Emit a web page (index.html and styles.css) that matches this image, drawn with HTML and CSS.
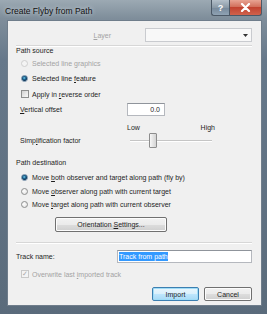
FILE: index.html
```html
<!DOCTYPE html>
<html lang="en">
<head>
    <meta charset="UTF-8">
    <title>Create Flyby from Path</title>
    <link rel="stylesheet" href="styles.css">
</head>
<body>
<div class="window">

    <!-- Barra de titulo -->
    <div class="titlebar">
        <span class="title">Create Flyby from Path</span>
        <div class="caption">
            <span class="cap-help">?</span>
            <span class="cap-close">
                <svg width="11" height="9" viewBox="0 0 11 9"><path d="M2 1 L9 8 M9 1 L2 8" stroke="#fff" stroke-width="2.2" stroke-linecap="round"/></svg>
            </span>
        </div>
    </div>

    <div class="client">

        <div class="layer-row">
            <span class="dim"><u>L</u>ayer</span>
            <div class="combo">
                <svg width="5" height="3" viewBox="0 0 5 3"><path d="M0 0 H5 L2.5 3 Z" fill="#333"/></svg>
            </div>
        </div>

        <div class="sep top-sep"></div>

        <div class="heading">Path source</div>
        <div class="opt opt-1 dim"><span class="radio disabled"></span><span>Selected line graphics</span></div>
        <div class="opt opt-2"><span class="radio checked"></span><span>Selected line <u>f</u>eature</span></div>
        <div class="opt opt-3"><span class="check"></span><span>Apply in <u>r</u>everse order</span></div>

        <div class="field-row offset-row">
            <span class="field-label"><u>V</u>ertical offset</span>
            <div class="textbox num">0.0</div>
        </div>

        <div class="range-labels">
            <span>Low</span>
            <span>High</span>
        </div>
        <div class="field-row slider-row">
            <span class="field-label">Simp<u>l</u>ification factor</span>
            <div class="slider">
                <div class="track"></div>
                <div class="thumb"></div>
            </div>
        </div>

        <div class="heading dest-heading">Path destination</div>
        <div class="opt dest-1"><span class="radio checked"></span><span>Move <u>b</u>oth observer and target along path (fly by)</span></div>
        <div class="opt dest-2"><span class="radio"></span><span>Move <u>o</u>bserver along path with current target</span></div>
        <div class="opt dest-3"><span class="radio"></span><span>Move <u>t</u>arget along path with current observer</span></div>

        <button class="btn orient-btn">Orientation <u>S</u>ettings...</button>

        <div class="sep bottom-sep"></div>

        <div class="track-row">
            <span class="track-label">Track name:</span>
            <div class="textbox track-box"><span class="selected">Track from path</span></div>
        </div>

        <div class="opt overwrite dim"><span class="check checked-dim">&#10003;</span><span>Overwrite last <u>i</u>mported track</span></div>

        <div class="actions">
            <button class="btn default">Import</button>
            <button class="btn">Cancel</button>
        </div>
    </div>
</div>
</body>
</html>
```

FILE: styles.css
```css
body {
    margin: 0;
    font-family: "Liberation Sans", Arial, sans-serif;
    font-size: 7px;
    color: #1e1e1e;
}
u {
    text-decoration-thickness: 1px;
    text-underline-offset: 1px;
}
.window {
    width: 267px;
    height: 314px;
    box-sizing: border-box;
    padding: 0 5px 8px 7px;
    background: linear-gradient(to bottom, #9ca9b3 0, #7f8e9b 18px, #66788a 60px, #5a6b7b 100%);
    display: flex;
    flex-direction: column;
}
.titlebar {
    height: 20px;
    display: flex;
    align-items: flex-start;
    margin-left: -2px;
}
.title {
    font-size: 8.5px;
    color: #111;
    padding-top: 6px;
    text-shadow: 0 0 4px #dfe6ec;
}
.caption {
    margin-left: auto;
    display: flex;
}
.cap-help, .cap-close {
    height: 16px;
    display: flex;
    align-items: center;
    justify-content: center;
    box-sizing: border-box;
    border: 1px solid #4b5866;
    border-top: none;
}
.cap-help {
    width: 18px;
    color: #fff;
    font-weight: bold;
    font-size: 9px;
    background: linear-gradient(to bottom, #b4c0ca, #8a99a6 50%, #76889a 51%, #8fa2b3);
    border-radius: 0 0 0 3px;
    border-right: none;
}
.cap-close {
    width: 33px;
    background: linear-gradient(to bottom, #e8a493, #d2705c 45%, #c24330 50%, #d0624c);
    border-radius: 0 0 3px 0;
}
.client {
    flex: 1;
    background: #f0f0f0;
    border: 1px solid #6f7d8b;
    padding: 7px 9px 0 8px;
}
.dim {
    color: #a3a3a3;
}
.layer-row {
    height: 14px;
    display: flex;
    align-items: center;
    justify-content: flex-end;
}
.layer-row .dim {
    margin-right: 34px;
}
.combo {
    width: 107px;
    height: 14px;
    box-sizing: border-box;
    border: 1px solid #c9cbcf;
    background: #f8f8f8;
    display: flex;
    align-items: center;
    justify-content: flex-end;
    padding-right: 3px;
}
.sep {
    height: 1px;
    background: #d7d7d7;
    border-bottom: 1px solid #fff;
}
.top-sep {
    margin-top: 3px;
}
.heading {
    height: 8px;
    line-height: 8px;
}
.opt {
    display: flex;
    align-items: center;
    padding-left: 5px;
    height: 12px;
}
.opt-1 { margin-top: 2px; }
.opt-2 { margin-top: 3px; }
.opt-3 { margin-top: 4px; }
.radio {
    width: 7px;
    height: 7px;
    box-sizing: border-box;
    border-radius: 50%;
    border: 1px solid #8e8f8f;
    background: radial-gradient(circle at 40% 40%, #fff, #dcdcdc);
    margin-right: 4px;
}
.radio.disabled {
    border-color: #cfcfcf;
    background: #f4f4f4;
}
.radio.checked {
    border-color: #6d8aa5;
    background: radial-gradient(circle at 45% 40%, #7fd0ef 0, #1d6a96 35%, #0e3050 70%, #d7e3ea 72%);
}
.check {
    width: 8px;
    height: 8px;
    box-sizing: border-box;
    border: 1px solid #8e8f8f;
    background: linear-gradient(135deg, #d2d2d2, #fafafa);
    margin-right: 3px;
}
.check.checked-dim {
    border-color: #c9c9c9;
    background: #f4f4f4;
    color: #a8a8a8;
    font-size: 7px;
    line-height: 6px;
    text-align: center;
}
.field-row {
    display: flex;
    align-items: center;
    padding-left: 4px;
}
.field-label {
    width: 107px;
}
.offset-row {
    height: 13px;
    margin-top: 3px;
}
.textbox {
    height: 13px;
    box-sizing: border-box;
    background: #fff;
    border: 1px solid #b5b8be;
    border-top-color: #8f949b;
}
.num {
    width: 38px;
    text-align: right;
    padding-right: 4px;
    line-height: 11px;
}
.range-labels {
    margin-top: 8px;
    margin-left: 111px;
    width: 88px;
    height: 8px;
    line-height: 8px;
    display: flex;
    justify-content: space-between;
}
.slider-row {
    height: 17px;
}
.slider {
    position: relative;
    width: 88px;
    height: 17px;
}
.track {
    position: absolute;
    left: 3px;
    right: 3px;
    top: 8px;
    height: 1px;
    background: #c5c5c5;
    border-bottom: 1px solid #fff;
}
.thumb {
    position: absolute;
    left: 22px;
    top: 1px;
    width: 8px;
    height: 15px;
    box-sizing: border-box;
    border: 1px solid #8d8d8d;
    border-radius: 1px;
    background: linear-gradient(to right, #f7f7f7, #e4e4e4 50%, #d4d4d4);
}
.dest-heading {
    margin-top: 10px;
}
.dest-1 { margin-top: 4px; }
.dest-2 { margin-top: 2px; }
.dest-3 { margin-top: 1px; }
.btn {
    font-family: inherit;
    font-size: 7px;
    color: #1e1e1e;
    height: 14px;
    padding: 0;
    box-sizing: border-box;
    border: 1px solid #707070;
    border-radius: 2px;
    background: linear-gradient(to bottom, #f2f2f2 0, #ebebeb 50%, #dddddd 51%, #cfcfcf 100%);
    box-shadow: inset 0 0 0 1px #fcfcfc;
}
.orient-btn {
    display: block;
    width: 112px;
    height: 15px;
    margin: 7px 0 0 39px;
}
.bottom-sep {
    margin-top: 10px;
}
.track-row {
    display: flex;
    align-items: center;
    margin-top: 6px;
    height: 13px;
}
.track-label {
    width: 101px;
}
.track-box {
    flex: 1;
    padding-left: 1px;
    line-height: 11px;
}
.selected {
    background: #3399ff;
    color: #fff;
    padding: 1px 0;
}
.overwrite {
    margin-top: 6px;
    height: 10px;
}
.actions {
    display: flex;
    justify-content: flex-end;
    gap: 5px;
    margin-top: 8px;
}
.actions .btn {
    width: 48px;
}
.btn.default {
    width: 47px;
    border-color: #3c7fb1;
    box-shadow: inset 0 0 0 1px #9fdcf7;
    background: linear-gradient(to bottom, #eaf6fd 0, #d9f0fc 50%, #bee6fd 51%, #a7d9f5 100%);
}
```
